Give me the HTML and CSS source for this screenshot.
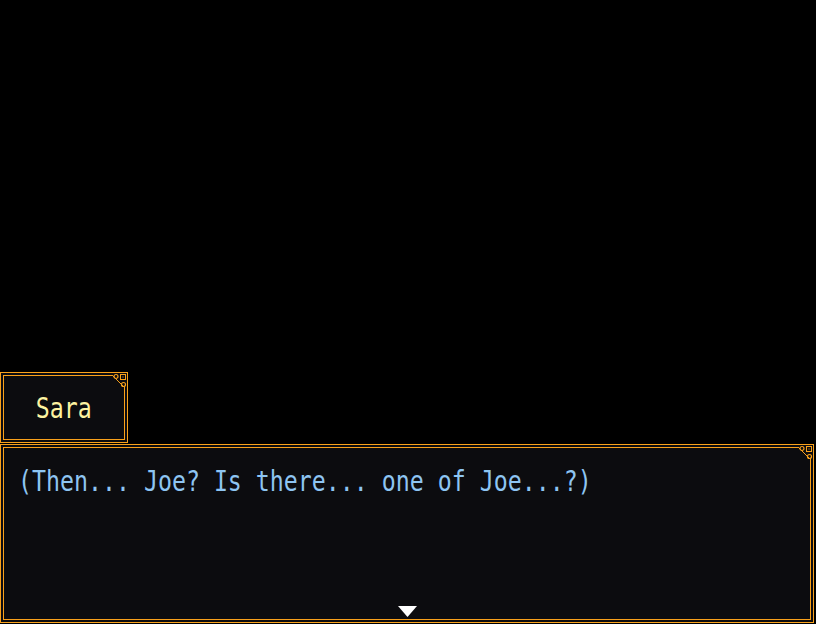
FILE: index.html
```html
<!DOCTYPE html>
<html>
<head>
<meta charset="utf-8">
<link rel="stylesheet" href="styles.css">
</head>
<body>
<div class="stage">
  <div class="window name-window">
    <div class="frame name-frame">
      <span class="name">Sara</span>
    </div>
    <svg class="ornament" width="19" height="19" viewBox="0 0 19 19">
      <rect x="4" y="0" width="15" height="15" fill="#0c0c0f"/>
      <path class="crisp" d="M0 2.5 H4.5 L12.5 10.5 L16.5 14.5 V19" fill="none" stroke="#f9a11b" stroke-width="1"/>
      <circle cx="8" cy="3.5" r="2" fill="none" stroke="#f9a11b" stroke-width="1.2"/>
      <rect class="crisp" x="12.5" y="1.5" width="5" height="5" fill="none" stroke="#f9a11b" stroke-width="1"/>
      <rect x="14.5" y="3.5" width="1" height="1" fill="#f9a11b"/>
      <circle cx="15.5" cy="11.5" r="2" fill="none" stroke="#f9a11b" stroke-width="1.2"/>
    </svg>
  </div>
  <div class="window message-window">
    <div class="frame message-frame">
      <p class="message">(Then... Joe? Is there... one of Joe...?)</p>
    </div>
    <svg class="ornament" width="19" height="19" viewBox="0 0 19 19">
      <rect x="4" y="0" width="15" height="15" fill="#0c0c0f"/>
      <path class="crisp" d="M0 2.5 H4.5 L12.5 10.5 L16.5 14.5 V19" fill="none" stroke="#f9a11b" stroke-width="1"/>
      <circle cx="8" cy="3.5" r="2" fill="none" stroke="#f9a11b" stroke-width="1.2"/>
      <rect class="crisp" x="12.5" y="1.5" width="5" height="5" fill="none" stroke="#f9a11b" stroke-width="1"/>
      <rect x="14.5" y="3.5" width="1" height="1" fill="#f9a11b"/>
      <circle cx="15.5" cy="11.5" r="2" fill="none" stroke="#f9a11b" stroke-width="1.2"/>
    </svg>
    <svg class="pause" width="19" height="11" viewBox="0 0 19 11">
      <polygon points="0,0 19,0 9.5,11" fill="#ffffff"/>
    </svg>
  </div>
</div>
</body>
</html>
```

FILE: styles.css
```css
html, body {
  margin: 0;
  padding: 0;
  background: #000;
}

.stage {
  width: 816px;
  height: 624px;
  display: flex;
  flex-direction: column;
  justify-content: flex-start;
  padding-top: 372px;
  box-sizing: border-box;
  background: #000;
}

.window {
  position: relative;
  box-sizing: border-box;
  border: 1px solid #f9a11b;
  padding: 2px;
  background: #0c0c0f;
}

.frame {
  box-sizing: border-box;
  border: 1px solid #f9a11b;
  height: 100%;
}

.name-window {
  width: 128px;
  height: 71px;
  margin-bottom: 1px;
}

.name-frame {
  display: flex;
  justify-content: center;
  padding-top: 15px;
}

.name {
  display: inline-block;
  font-family: "DejaVu Sans Mono", monospace;
  font-size: 28px;
  line-height: 36px;
  color: #fdf3a0;
  transform: scaleX(0.83);
  transform-origin: center;
  white-space: nowrap;
}

.message-window {
  width: 814px;
  height: 179px;
}

.message-frame {
  padding: 16px 14px;
}

.message {
  margin: 0;
  font-family: "DejaVu Sans Mono", monospace;
  font-size: 28px;
  line-height: 36px;
  color: #8ec5f2;
  transform: scaleX(0.83);
  transform-origin: left top;
  white-space: nowrap;
}

.ornament {
  position: absolute;
  top: 0;
  right: 0;
  display: block;
}

.crisp {
  shape-rendering: crispEdges;
}

.pause {
  position: absolute;
  left: 397px;
  top: 161px;
  display: block;
}
```
